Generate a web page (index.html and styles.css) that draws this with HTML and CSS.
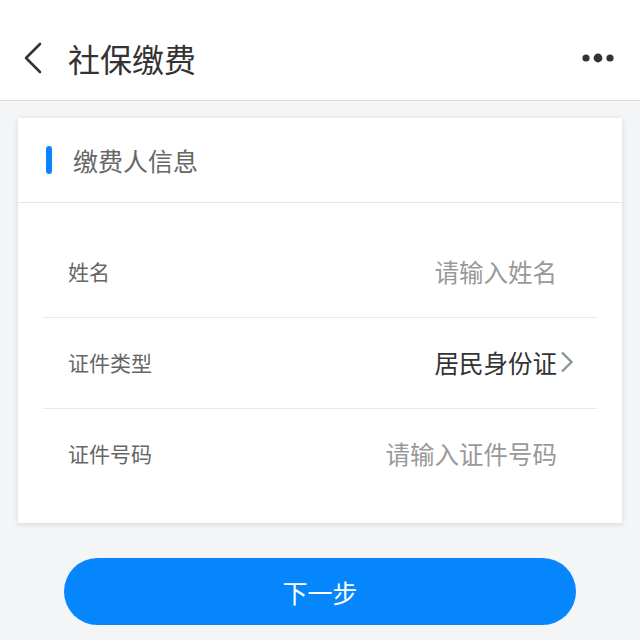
FILE: index.html
```html
<!DOCTYPE html>
<html lang="zh-CN">
<head>
<meta charset="utf-8">
<title>社保缴费</title>
<link rel="stylesheet" href="styles.css">
</head>
<body>
<header class="topbar">
  <svg class="back" width="20" height="32" viewBox="0 0 20 32"><path d="M17 2 L3 16 L17 30" fill="none" stroke="#333" stroke-width="2.6" stroke-linecap="round" stroke-linejoin="round"/></svg>
  <h1 class="title">社保缴费</h1>
  <svg class="more" width="32" height="10" viewBox="0 0 32 10"><circle cx="4" cy="5" r="3.6" fill="#333"/><circle cx="16" cy="5" r="4.4" fill="#333"/><circle cx="28" cy="5" r="3.6" fill="#333"/></svg>
</header>
<main class="content">
  <section class="card">
    <div class="card-head">
      <span class="mark"></span>
      <span class="card-title">缴费人信息</span>
    </div>
    <div class="list">
      <div class="row">
        <span class="label">姓名</span>
        <span class="placeholder">请输入姓名</span>
      </div>
      <div class="row">
        <span class="label">证件类型</span>
        <span class="value">居民身份证<svg class="arrow" width="15" height="22" viewBox="0 0 15 22"><path d="M3 1.5 L12.5 11 L3 20.5" fill="none" stroke="#879797" stroke-width="2.4"/></svg></span>
      </div>
      <div class="row">
        <span class="label">证件号码</span>
        <span class="placeholder">请输入证件号码</span>
      </div>
    </div>
  </section>
  <button class="next">下一步</button>
</main>
</body>
</html>
```

FILE: styles.css
```css
* { box-sizing: border-box; }
html, body { margin: 0; padding: 0; }
body {
  background: #f4f5f6;
  font-family: "Noto Sans CJK SC", "Noto Sans", sans-serif;
  width: 640px;
  height: 640px;
  overflow: hidden;
}
.topbar {
  height: 101px;
  background: #fff;
  border-bottom: 1px solid #dcdcdc;
  display: flex;
  align-items: center;
  padding: 15px 26px 0 23px;
}
.back { flex: none; }
.title {
  margin: 0 0 0 25px;
  font-size: 32px;
  font-weight: 400;
  color: #333;
  flex: 1;
  line-height: 1;
}
.more { flex: none; }
.content { padding: 17px 18px 0; }
.card {
  background: #fff;
  box-shadow: 0 1px 6px rgba(0,0,0,0.13);
}
.card-head {
  height: 85px;
  border-bottom: 1px solid #e6e6e6;
  display: flex;
  align-items: center;
  padding-left: 28px;
}
.mark {
  width: 6px;
  height: 28px;
  border-radius: 3px;
  background: #0a84ff;
  margin-right: 21px;
}
.card-title {
  font-size: 25px;
  color: #666;
  line-height: 1;
}
.list { padding: 24px 25px; }
.row {
  height: 90px;
  display: flex;
  align-items: center;
  justify-content: space-between;
  padding: 0 40px 0 25px;
}
.row + .row { border-top: 1px solid #e8e8e8; height: 91px; }
.label { font-size: 21px; color: #666; margin-top: -2px; }
.placeholder { font-size: 24.5px; color: #999; margin-top: -2px; }
.value {
  font-size: 24.5px;
  color: #333;
  display: flex;
  align-items: center;
  margin-right: -17px;
  margin-top: -2px;
}
.arrow { margin-left: 2px; }
.next {
  display: block;
  margin: 35px auto 0;
  width: 512px;
  height: 67px;
  border: none;
  border-radius: 34px;
  background: #0686fc;
  color: #fff;
  font-family: "Noto Sans CJK SC", "Noto Sans", sans-serif;
  font-size: 25px;
  padding: 0;
}
```
